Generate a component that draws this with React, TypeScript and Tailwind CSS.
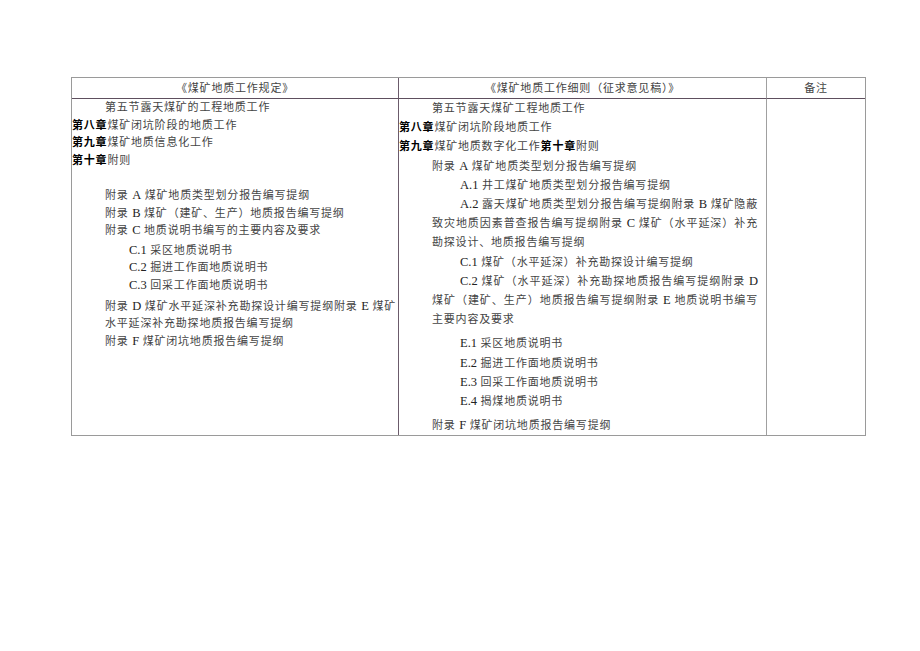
import type { FC, ReactNode } from 'react';

type Line = { key: string; content: ReactNode; className: string };

const Chapter: FC<{ children: ReactNode }> = ({ children }) => (
  <b className="font-bold text-black">{children}</b>
);

// latin labels (A, C.1 ...) are set a bit larger than the CJK text
const withLatin = (text: string) =>
  text.split(/([A-Z](?:\.\d)?)/).map((part, i) =>
    i % 2 ? (
      <span key={i} className="text-[12.5px] tracking-normal text-[#222]">
        {part}
      </span>
    ) : (
      part
    ),
  );

const ruleLines: Line[] = [
  { key: 'l1', content: '第五节露天煤矿的工程地质工作', className: 'pl-[33px]' },
  { key: 'l2', content: <><Chapter>第八章</Chapter>煤矿闭坑阶段的地质工作</>, className: '' },
  { key: 'l3', content: <><Chapter>第九章</Chapter>煤矿地质信息化工作</>, className: '' },
  { key: 'l4', content: <><Chapter>第十章</Chapter>附则</>, className: '' },
  { key: 'l5', content: '\u00a0', className: '' },
  { key: 'l6', content: '附录 A 煤矿地质类型划分报告编写提纲', className: 'pl-[33px]' },
  { key: 'l7', content: '附录 B 煤矿（建矿、生产）地质报告编写提纲', className: 'pl-[33px]' },
  { key: 'l8', content: '附录 C 地质说明书编写的主要内容及要求', className: 'pl-[33px]' },
  { key: 'l9', content: 'C.1 采区地质说明书', className: 'pl-[57px] mt-[2px]' },
  { key: 'l10', content: 'C.2 掘进工作面地质说明书', className: 'pl-[57px]' },
  { key: 'l11', content: 'C.3 回采工作面地质说明书', className: 'pl-[57px]' },
  {
    key: 'l12',
    content: '附录 D 煤矿水平延深补充勘探设计编写提纲附录 E 煤矿',
    className: 'pl-[33px] pr-[2px] mt-[3px] text-justify [text-align-last:justify]',
  },
  { key: 'l13', content: '水平延深补充勘探地质报告编写提纲', className: 'pl-[33px]' },
  { key: 'l14', content: '附录 F 煤矿闭坑地质报告编写提纲', className: 'pl-[33px]' },
];

const detailLines: Line[] = [
  { key: 'r1', content: '第五节露天煤矿工程地质工作', className: 'pl-[33px]' },
  { key: 'r2', content: <><Chapter>第八章</Chapter>煤矿闭坑阶段地质工作</>, className: '' },
  {
    key: 'r3',
    content: <><Chapter>第九章</Chapter>煤矿地质数字化工作<Chapter>第十章</Chapter>附则</>,
    className: '',
  },
  { key: 'r4', content: '附录 A 煤矿地质类型划分报告编写提纲', className: 'pl-[33px]' },
  { key: 'r5', content: 'A.1 井工煤矿地质类型划分报告编写提纲', className: 'pl-[61px]' },
  {
    key: 'r6',
    content: 'A.2 露天煤矿地质类型划分报告编写提纲附录 B 煤矿隐蔽',
    className: 'pl-[61px] pr-[8px] text-justify [text-align-last:justify]',
  },
  {
    key: 'r7',
    content: '致灾地质因素普查报告编写提纲附录 C 煤矿（水平延深）补充',
    className: 'pl-[33px] pr-[8px] text-justify [text-align-last:justify]',
  },
  { key: 'r8', content: '勘探设计、地质报告编写提纲', className: 'pl-[33px]' },
  { key: 'r9', content: 'C.1 煤矿（水平延深）补充勘探设计编写提纲', className: 'pl-[61px]' },
  {
    key: 'r10',
    content: 'C.2 煤矿（水平延深）补充勘探地质报告编写提纲附录 D',
    className: 'pl-[61px] pr-[8px] text-justify [text-align-last:justify]',
  },
  {
    key: 'r11',
    content: '煤矿（建矿、生产）地质报告编写提纲附录 E 地质说明书编写',
    className: 'pl-[33px] pr-[8px] text-justify [text-align-last:justify]',
  },
  { key: 'r12', content: '主要内容及要求', className: 'pl-[33px]' },
  { key: 'r13', content: 'E.1 采区地质说明书', className: 'pl-[61px] mt-[5px]' },
  { key: 'r14', content: 'E.2 掘进工作面地质说明书', className: 'pl-[61px]' },
  { key: 'r15', content: 'E.3 回采工作面地质说明书', className: 'pl-[61px]' },
  { key: 'r16', content: 'E.4 揭煤地质说明书', className: 'pl-[61px]' },
  { key: 'r17', content: '附录 F 煤矿闭坑地质报告编写提纲', className: 'pl-[33px] mt-[5px]' },
];

const Lines: FC<{ lines: Line[]; lineClass: string }> = ({ lines, lineClass }) => (
  <div className="flex flex-col">
    {lines.map(({ key, content, className }) => (
      <div key={key} className={`${lineClass} whitespace-nowrap ${className}`}>
        {typeof content === 'string' ? withLatin(content) : content}
      </div>
    ))}
  </div>
);

export default function App() {
  return (
    <div className="min-h-[651px] bg-white pl-[71px] pt-[77px] font-['Liberation_Serif','Noto_Sans_CJK_SC',serif] text-[11px] tracking-[0.8px] text-[#444]">
      <div className="grid w-[795px] grid-cols-[327px_368px_98px] border border-[#9a9a9a]">
        <div className="flex h-[21px] items-center justify-center border-r border-b border-r-[#6b5b6b] border-b-[#5e4f5e]">
          《煤矿地质工作规定》
        </div>
        <div className="flex h-[21px] items-center justify-center border-r border-b border-r-[#a0a0a0] border-b-[#5e4f5e]">
          《煤矿地质工作细则（征求意见稿）》
        </div>
        <div className="flex h-[21px] items-center justify-center border-b border-b-[#5e4f5e]">
          备注
        </div>

        <div className="h-[336px] border-r border-r-[#6b5b6b]">
          <Lines lines={ruleLines} lineClass="leading-[17.6px]" />
        </div>
        <div className="h-[336px] border-r border-r-[#a0a0a0]">
          <Lines lines={detailLines} lineClass="leading-[19.2px]" />
        </div>
        <div className="h-[336px]" />
      </div>
    </div>
  );
}
